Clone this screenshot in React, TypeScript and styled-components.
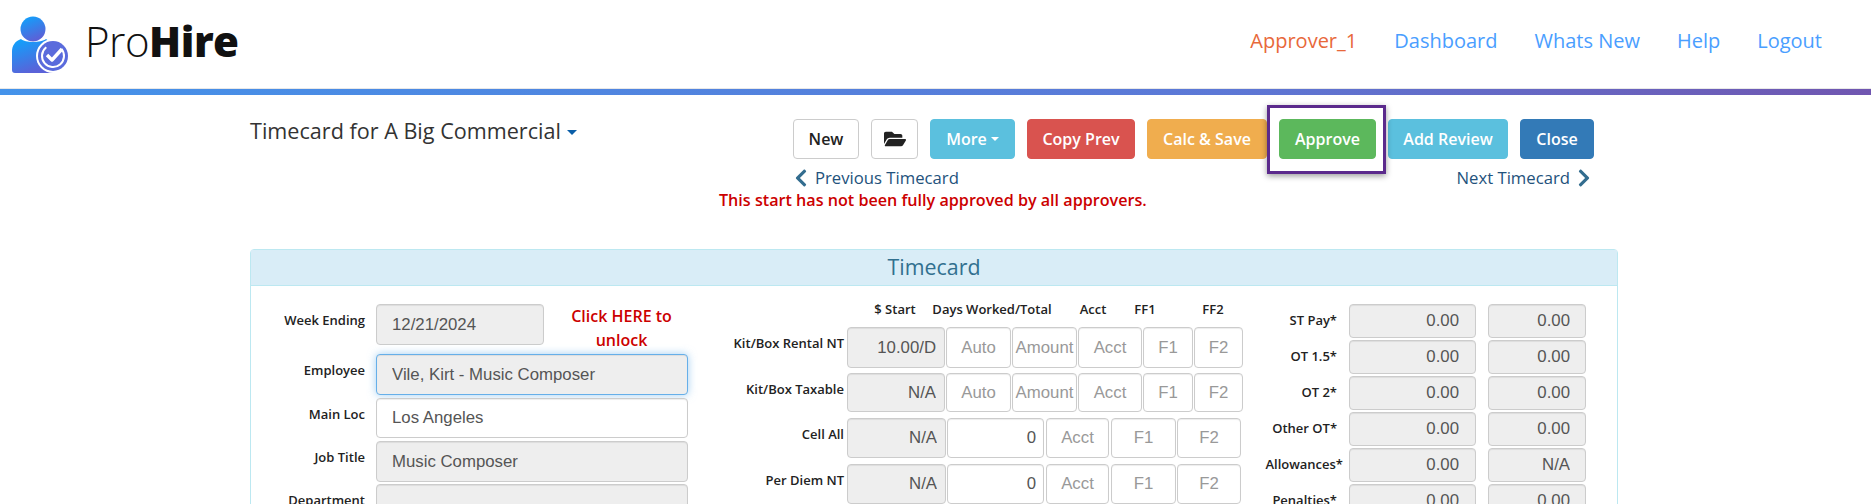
import React from 'react'
import styled, { createGlobalStyle } from 'styled-components'
import { FaChevronLeft, FaChevronRight, FaFolderOpen } from 'react-icons/fa'

const GlobalStyle = createGlobalStyle`
  html, body {
    margin: 0;
    height: 504px;
    overflow: hidden;
    background: #fff;
    font-family: 'Open Sans', sans-serif;
    color: #333;
  }
  * { box-sizing: border-box; }
`

const TopBar = styled.header`
  height: 89px;
  display: flex;
  justify-content: space-between;
  align-items: center;
  padding: 0 49px 9px 12px;
`

const Brand = styled.div`
  display: flex;
  align-items: center;
  gap: 15px;
  padding-top: 9px;
`

const BrandName = styled.span`
  margin-bottom: 8px;
  font-size: 42px;
  font-weight: 300;
  line-height: 1;
  color: #111;
  letter-spacing: -0.5px;
  b { font-weight: 800; }
`

const Nav = styled.nav`
  display: flex;
  gap: 37px;
  font-size: 20px;
`

const NavLink = styled.a<{ $user?: boolean }>`
  color: ${(p) => (p.$user ? '#e8683a' : '#4a9eff')};
  text-decoration: none;
`

const GradientBar = styled.div`
  height: 6px;
  background: linear-gradient(90deg, #4493ea 0%, #5c78d6 65%, #7056b0 100%);
  box-shadow: 0 -1px 0 #e8e8e8;
`

const Main = styled.main`
  width: 1368px;
  margin-left: 250px;
`

const TitleRow = styled.div`
  display: flex;
  justify-content: space-between;
  padding-top: 24px;
  height: 154px;
`

const Title = styled.h1`
  margin: 0;
  font-size: 21.6px;
  font-weight: 400;
  line-height: 24px;
  display: flex;
  align-items: center;
  height: 24px;
  gap: 6px;
`

const Caret = styled.i`
  width: 0;
  height: 0;
  margin-top: 3px;
  border-top: 5px solid #0a5ea8;
  border-left: 5px solid transparent;
  border-right: 5px solid transparent;
`

const Actions = styled.div`
  width: 802px;
  margin-right: 23px;
`

const ButtonRow = styled.div`
  display: flex;
  gap: 12px;
  height: 40px;
`

const Slot = styled.div`
  position: relative;
`

const Button = styled.button<{ $bg?: string; $w: number }>`
  width: ${(p) => p.$w}px;
  height: 40px;
  padding: 0;
  border: 1px solid ${(p) => p.$bg ?? '#ccc'};
  border-radius: 4px;
  background: ${(p) => p.$bg ?? '#fff'};
  color: ${(p) => (p.$bg ? '#fff' : '#222')};
  font-family: inherit;
  font-size: 16px;
  font-weight: 600;
  display: inline-flex;
  align-items: center;
  justify-content: center;
  gap: 4px;
`

const MiniCaret = styled.i`
  width: 0;
  height: 0;
  border-top: 4px solid #fff;
  border-left: 4px solid transparent;
  border-right: 4px solid transparent;
`

const Highlight = styled.div`
  position: absolute;
  top: -14px;
  left: -12px;
  width: 119px;
  height: 69px;
  border: 3px solid #5b2a8c;
  box-shadow: 0 2px 6px rgba(0, 0, 0, 0.4);
  pointer-events: none;
`

const PagerRow = styled.div`
  display: flex;
  justify-content: space-between;
  margin-left: -2px;
  padding: 7px 1px 0 0;
  height: 30px;
`

const Pager = styled.a`
  display: flex;
  align-items: center;
  gap: 4px;
  color: #23527c;
  font-size: 16.7px;
  line-height: 22px;
  svg { color: #336d8f; font-size: 20px; }
`

const Notice = styled.p`
  margin: 0 0 0 -74px;
  color: #c00;
  font-size: 16.15px;
  font-weight: 600;
  line-height: 22px;
`

const Panel = styled.section`
  border: 1px solid #bce8f1;
  border-radius: 4px;
  height: 400px;
`

const PanelHeading = styled.h2`
  margin: 0;
  height: 36px;
  background: #d9edf7;
  color: #31708f;
  font-size: 21.4px;
  font-weight: 400;
  line-height: 34px;
  text-align: center;
  border-bottom: 1px solid #bce8f1;
`

const PanelBody = styled.div`
  display: flex;
  padding-top: 18px;
`

const LeftForm = styled.div`
  flex: none;
  width: 469px;
  padding-left: 1px;
`

const FieldRow = styled.div<{ $gap: number }>`
  display: flex;
  margin-bottom: ${(p) => p.$gap}px;
`

const Label = styled.label<{ $w: number; $pad?: number }>`
  flex: none;
  width: ${(p) => p.$w}px;
  padding-right: ${(p) => p.$pad ?? 0}px;
  padding-top: 6px;
  text-align: right;
  font-size: 13px;
  font-weight: 600;
  line-height: 20px;
  white-space: nowrap;
  color: #222;
`

const Input = styled.input<{ $w: number; $h?: number; $right?: number; $center?: boolean; $off?: boolean; $focus?: boolean }>`
  flex: none;
  width: ${(p) => p.$w}px;
  height: ${(p) => p.$h ?? 40}px;
  padding: 0 ${(p) => p.$right ?? (p.$center ? 0 : 15)}px 0 ${(p) => (p.$right || p.$center ? 0 : 15)}px;
  border: 1px solid ${(p) => (p.$focus ? '#66afe9' : '#ccc')};
  border-radius: 4px;
  background: ${(p) => (p.$off ? '#eee' : '#fff')};
  color: #555;
  font-family: 'Liberation Sans', Arial, sans-serif;
  font-size: 16.8px;
  text-align: ${(p) => (p.$right ? 'right' : p.$center ? 'center' : 'left')};
  outline: none;
  box-shadow: ${(p) =>
    p.$focus
      ? 'inset 0 1px 1px rgba(0,0,0,.075), 0 0 8px rgba(102,175,233,.6)'
      : 'inset 0 1px 1px rgba(0,0,0,.075)'};
  &::placeholder { color: #999; opacity: 1; }
`

const Unlock = styled.a`
  width: 155px;
  height: 41px;
  color: #c00;
  font-size: 16px;
  font-weight: 600;
  line-height: 24px;
  text-align: center;
`

const Spacer = styled.span`
  flex: none;
  width: 11px;
`

const MiddleForm = styled.div`
  flex: none;
  width: 525px;
`

const ColumnHeads = styled.div`
  display: flex;
  height: 23px;
  padding-left: 150px;
  font-size: 13px;
  font-weight: 600;
  line-height: 10px;
  color: #222;
`

const ColumnHead = styled.span<{ $w: number }>`
  flex: none;
  width: ${(p) => p.$w}px;
  display: flex;
  justify-content: center;
  white-space: nowrap;
`

const CostRow = styled.div<{ $gap: number }>`
  display: flex;
  margin-bottom: ${(p) => p.$gap}px;
`

const Cells = styled.div`
  display: flex;
  margin-left: 3px;
  gap: 1px;
`

const RightForm = styled.div`
  flex: 1;
  min-width: 0;
`

const TotalRow = styled.div`
  display: flex;
  margin-bottom: 2px;
`

const NarrowGap = styled.span`
  flex: none;
  width: 12px;
`

type Cell = { w: number; value?: string; hint?: string; off?: boolean; gap?: boolean }

const kitCells = (start: string): Cell[] => [
  { w: 98, value: start, off: true },
  { w: 65, hint: 'Auto' },
  { w: 65, hint: 'Amount' },
  { w: 64, hint: 'Acct' },
  { w: 50, hint: 'F1' },
  { w: 49, hint: 'F2' },
]

const allowanceCells: Cell[] = [
  { w: 99, value: 'N/A', off: true },
  { w: 97, value: '0' },
  { w: 63, hint: 'Acct', gap: true },
  { w: 65, hint: 'F1', gap: true },
  { w: 64, hint: 'F2' },
]

const costRows: { label: string; cells: Cell[]; h: number; gap: number }[] = [
  { label: 'Kit/Box Rental NT', cells: kitCells('10.00/D'), h: 41, gap: 5 },
  { label: 'Kit/Box Taxable', cells: kitCells('N/A'), h: 39, gap: 6 },
  { label: 'Cell All', cells: allowanceCells, h: 40, gap: 6 },
  { label: 'Per Diem NT', cells: allowanceCells, h: 40, gap: 0 },
]

const totals = [
  { label: 'ST Pay*', a: '0.00', b: '0.00', pad: 12 },
  { label: 'OT 1.5*', a: '0.00', b: '0.00', pad: 12 },
  { label: 'OT 2*', a: '0.00', b: '0.00', pad: 12 },
  { label: 'Other OT*', a: '0.00', b: '0.00', pad: 12 },
  { label: 'Allowances*', a: '0.00', b: 'N/A', pad: 6 },
  { label: 'Penalties*', a: '0.00', b: '0.00', pad: 12 },
]

const Logo = () => (
  <svg width="58" height="60" viewBox="0 0 58 60">
    <defs>
      <linearGradient id="logoFill" x1="0" y1="0" x2="0.4" y2="1">
        <stop offset="0" stopColor="#0aa6ff" />
        <stop offset="1" stopColor="#5a62d8" />
      </linearGradient>
    </defs>
    <circle cx="21" cy="14" r="12.5" fill="url(#logoFill)" />
    <path
      d="M9 24 C13 28 29 28 34 24 C39 27 41 31 41 36 L41 58 L3 58 C1 58 0 57 0 55 L0 36 C0 31 3 26 9 24 Z"
      fill="url(#logoFill)"
    />
    <circle cx="41" cy="41" r="17" fill="#fff" />
    <circle cx="41" cy="41" r="15" fill="#5a6bdc" />
    <circle cx="41" cy="41" r="11" fill="none" stroke="#fff" strokeWidth="2" strokeDasharray="52 17" transform="rotate(-40 41 41)" />
    <path d="M35 40 L40 45 L50 34" fill="none" stroke="#fff" strokeWidth="3.4" strokeLinejoin="round" />
  </svg>
)

export default function App() {
  return (
    <>
      <GlobalStyle />
      <TopBar>
        <Brand>
          <Logo />
          <BrandName>
            Pro<b>Hire</b>
          </BrandName>
        </Brand>
        <Nav>
          <NavLink $user>Approver_1</NavLink>
          <NavLink>Dashboard</NavLink>
          <NavLink>Whats New</NavLink>
          <NavLink>Help</NavLink>
          <NavLink>Logout</NavLink>
        </Nav>
      </TopBar>
      <GradientBar />
      <Main>
        <TitleRow>
          <Title>
            Timecard for A Big Commercial <Caret />
          </Title>
          <Actions>
            <ButtonRow>
              <Button $w={66}>New</Button>
              <Button $w={47}>
                <FaFolderOpen size={22} />
              </Button>
              <Button $w={85} $bg="#5bc0de">
                More <MiniCaret />
              </Button>
              <Button $w={108} $bg="#d9534f">
                Copy Prev
              </Button>
              <Button $w={120} $bg="#f0ad4e">
                Calc &amp; Save
              </Button>
              <Slot>
                <Button $w={97} $bg="#5cb85c">
                  Approve
                </Button>
                <Highlight />
              </Slot>
              <Button $w={120} $bg="#5bc0de">
                Add Review
              </Button>
              <Button $w={74} $bg="#337ab7">
                Close
              </Button>
            </ButtonRow>
            <PagerRow>
              <Pager>
                <FaChevronLeft /> Previous Timecard
              </Pager>
              <Pager>
                Next Timecard <FaChevronRight />
              </Pager>
            </PagerRow>
            <Notice>This start has not been fully approved by all approvers.</Notice>
          </Actions>
        </TitleRow>
        <Panel>
          <PanelHeading>Timecard</PanelHeading>
          <PanelBody>
            <LeftForm>
              <FieldRow $gap={9}>
                <Label $w={113}>Week Ending</Label>
                <Spacer />
                <Input $w={168} $h={41} $off readOnly value="12/21/2024" />
                <Unlock>Click HERE to unlock</Unlock>
              </FieldRow>
              <FieldRow $gap={3}>
                <Label $w={113}>Employee</Label>
                <Spacer />
                <Input $w={312} $h={41} $off $focus readOnly value="Vile, Kirt - Music Composer" />
              </FieldRow>
              <FieldRow $gap={3}>
                <Label $w={113}>Main Loc</Label>
                <Spacer />
                <Input $w={312} readOnly value="Los Angeles" />
              </FieldRow>
              <FieldRow $gap={2}>
                <Label $w={113}>Job Title</Label>
                <Spacer />
                <Input $w={312} $h={41} $off readOnly value="Music Composer" />
              </FieldRow>
              <FieldRow $gap={0}>
                <Label $w={113}>Department</Label>
                <Spacer />
                <Input $w={312} $off readOnly />
              </FieldRow>
            </LeftForm>
            <MiddleForm>
              <ColumnHeads>
                <ColumnHead $w={50}>$ Start</ColumnHead>
                <ColumnHead $w={144}>Days Worked/Total</ColumnHead>
                <ColumnHead $w={58}>Acct</ColumnHead>
                <ColumnHead $w={46}>FF1</ColumnHead>
                <ColumnHead $w={90}>FF2</ColumnHead>
              </ColumnHeads>
              {costRows.map((row) => (
                <CostRow key={row.label} $gap={row.gap}>
                  <Label $w={124}>{row.label}</Label>
                  <Cells>
                    {row.cells.map((c, i) => (
                      <React.Fragment key={i}>
                        {c.gap && <span />}
                        <Input
                          $w={c.w}
                          $h={row.h}
                          $off={c.off}
                          $center={!!c.hint}
                          $right={c.value ? (c.off ? 8 : 7) : undefined}
                          readOnly
                          value={c.value}
                          placeholder={c.hint}
                        />
                      </React.Fragment>
                    ))}
                  </Cells>
                </CostRow>
              ))}
            </MiddleForm>
            <RightForm>
              {totals.map((t) => (
                <TotalRow key={t.label}>
                  <Label $w={104} $pad={t.pad}>
                    {t.label}
                  </Label>
                  <Input $w={127} $h={34} $off $right={16} readOnly value={t.a} />
                  <NarrowGap />
                  <Input $w={98} $h={34} $off $right={15} readOnly value={t.b} />
                </TotalRow>
              ))}
            </RightForm>
          </PanelBody>
        </Panel>
      </Main>
    </>
  )
}
